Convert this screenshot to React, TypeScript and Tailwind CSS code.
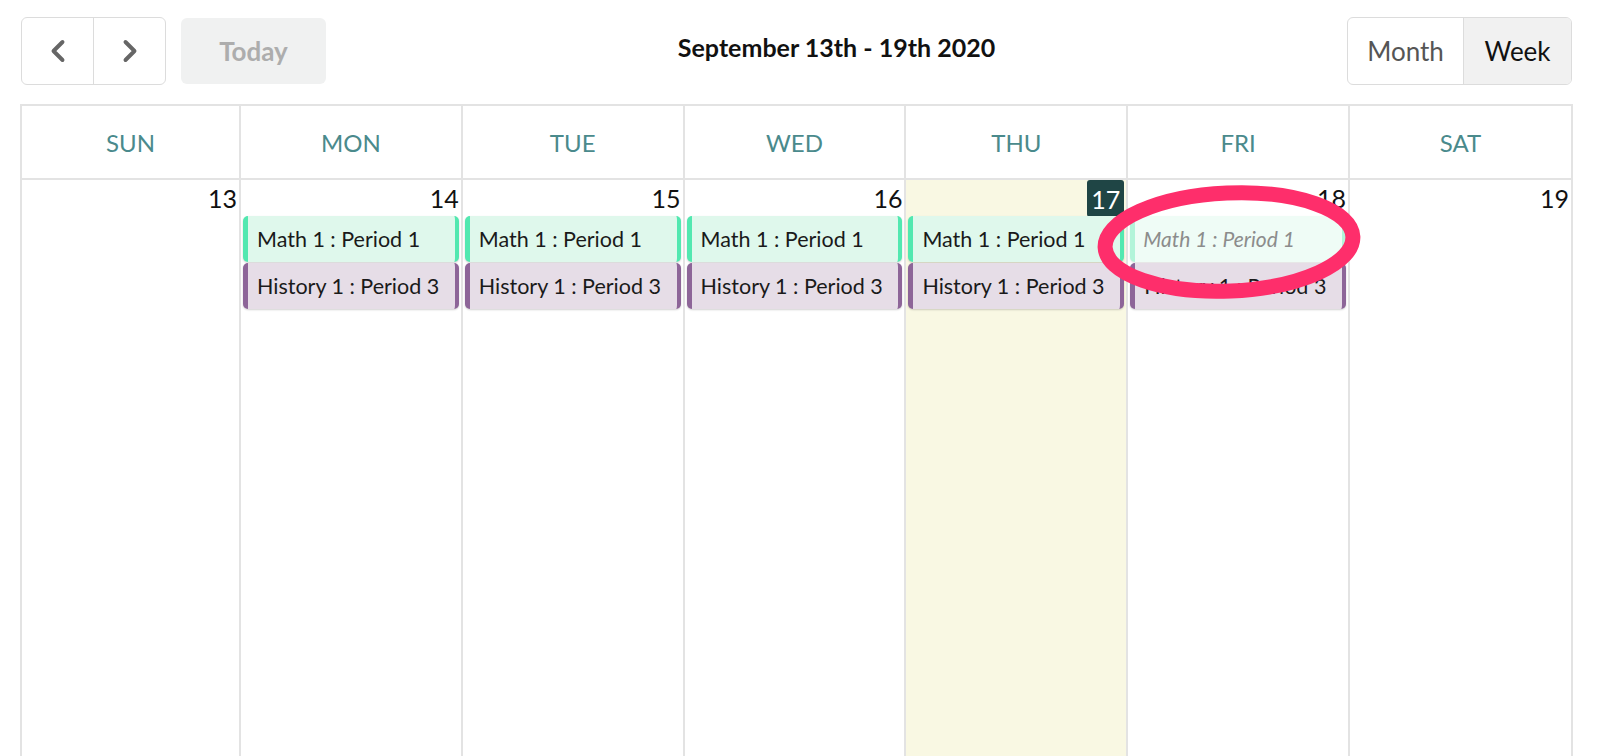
import React from "react";
import { ChevronLeft, ChevronRight } from "lucide-react";

type Ev = { title: string; kind: "math" | "history"; ghost?: boolean };

const days = [
    { name: "SUN", date: 13, events: [] as Ev[] },
    {
        name: "MON",
        date: 14,
        events: [
            { title: "Math 1 : Period 1", kind: "math" },
            { title: "History 1 : Period 3", kind: "history" },
        ] as Ev[],
    },
    {
        name: "TUE",
        date: 15,
        events: [
            { title: "Math 1 : Period 1", kind: "math" },
            { title: "History 1 : Period 3", kind: "history" },
        ] as Ev[],
    },
    {
        name: "WED",
        date: 16,
        events: [
            { title: "Math 1 : Period 1", kind: "math" },
            { title: "History 1 : Period 3", kind: "history" },
        ] as Ev[],
    },
    {
        name: "THU",
        date: 17,
        today: true,
        events: [
            { title: "Math 1 : Period 1", kind: "math" },
            { title: "History 1 : Period 3", kind: "history" },
        ] as Ev[],
    },
    {
        name: "FRI",
        date: 18,
        events: [
            { title: "Math 1 : Period 1", kind: "math", ghost: true },
            { title: "History 1 : Period 3", kind: "history" },
        ] as Ev[],
    },
    { name: "SAT", date: 19, events: [] as Ev[] },
];

function EventCard({ ev }: { ev: Ev }) {
    if (ev.ghost) {
        return (
            <div className="mx-[2px] h-[46px] flex items-center pl-[8px] rounded-[5px] bg-[#effcf6] border-l-[5px] border-r-[4px] border-[#b2f4d9] shadow-[0_1px_2px_rgba(0,0,0,0.12)]">
                <span className="text-[21px] italic text-[#8c8c8c] whitespace-nowrap">{ev.title}</span>
            </div>
        );
    }
    const cls =
        ev.kind === "math"
            ? "bg-[#dff8ec] border-[#52e8b0]"
            : "bg-[#e6dde7] border-[#8d6598]";
    return (
        <div
            className={
                "mx-[2px] h-[46px] flex items-center pl-[9px] rounded-[5px] border-l-[5px] border-r-[4px] shadow-[0_1px_2px_rgba(0,0,0,0.18)] " +
                cls
            }
        >
            <span className="text-[21.5px] text-[#1a1a1a] whitespace-nowrap">{ev.title}</span>
        </div>
    );
}

export default function App() {
    return (
        <div
            className="relative w-[1600px] h-[756px] overflow-hidden bg-white"
            style={{ fontFamily: "Lato, 'Open Sans', sans-serif" }}
        >
            {/* toolbar */}
            <div className="flex items-center pl-[21px] pr-[28px] pt-[17px] h-[85px]">
                <div className="flex h-[68px] w-[145px] border-[1.5px] border-[#dcdcdc] rounded-[6px] overflow-hidden">
                    <button className="flex-1 flex items-center justify-center border-r-[1.5px] border-[#dcdcdc] text-[#666]">
                        <ChevronLeft size={36} strokeWidth={2.6} />
                    </button>
                    <button className="flex-1 flex items-center justify-center text-[#666]">
                        <ChevronRight size={36} strokeWidth={2.6} />
                    </button>
                </div>
                <button className="ml-[15px] h-[66px] w-[145px] rounded-[6px] bg-[#f0f1f1] text-[26px] font-bold text-[#adadad]">
                    Today
                </button>
                <div className="flex-1 text-center text-[25px] font-bold text-[#111] pb-[6px]">
                    September 13th - 19th 2020
                </div>
                <div className="flex h-[68px] w-[225px] border-[1.5px] border-[#dcdcdc] rounded-[6px] overflow-hidden text-[26px]">
                    <button className="w-[116px] border-r-[1.5px] border-[#dcdcdc] text-[#555]">Month</button>
                    <button className="flex-1 bg-[#f1f1f1] text-[#111]">Week</button>
                </div>
            </div>

            {/* calendar */}
            <div className="ml-[20px] mt-[19px] w-[1553px] border-t-2 border-l-2 border-[#e3e3e3]">
                <div className="grid grid-cols-[219px_repeat(5,minmax(0,1fr))_223px]">
                    {days.map((d) => (
                        <div
                            key={d.name}
                            className="h-[74px] flex items-center justify-center pt-[2px] border-r-2 border-b-2 border-[#e3e3e3] text-[24px] text-[#4a8a8c]"
                        >
                            {d.name}
                        </div>
                    ))}
                    {days.map((d) => (
                        <div
                            key={d.name + "b"}
                            className={
                                "h-[600px] border-r-2 border-[#e3e3e3] flex flex-col " +
                                (d.today ? "bg-[#f9f8e3]" : "")
                            }
                        >
                            <div className="h-[36px] flex justify-end pr-[2px]">
                                {d.today ? (
                                    <span className="h-[37px] px-[4px] rounded-[3px] bg-[#1f4545] text-white text-[25px] leading-[38px]">
                                        {d.date}
                                    </span>
                                ) : (
                                    <span className="text-[25px] leading-[37px] text-[#111]">{d.date}</span>
                                )}
                            </div>
                            <div className="flex flex-col gap-[1px]">
                                {d.events.map((ev, i) => (
                                    <EventCard key={i} ev={ev} />
                                ))}
                            </div>
                        </div>
                    ))}
                </div>
            </div>

            {/* annotation circle */}
            <svg
                className="absolute left-0 top-0 pointer-events-none"
                width="1600"
                height="756"
                viewBox="0 0 1600 756"
            >
                <ellipse
                    cx="1229"
                    cy="242"
                    rx="124"
                    ry="49"
                    fill="none"
                    stroke="#fe2e6b"
                    strokeWidth="15"
                    transform="rotate(-2.5 1229 242)"
                />
            </svg>
        </div>
    );
}
